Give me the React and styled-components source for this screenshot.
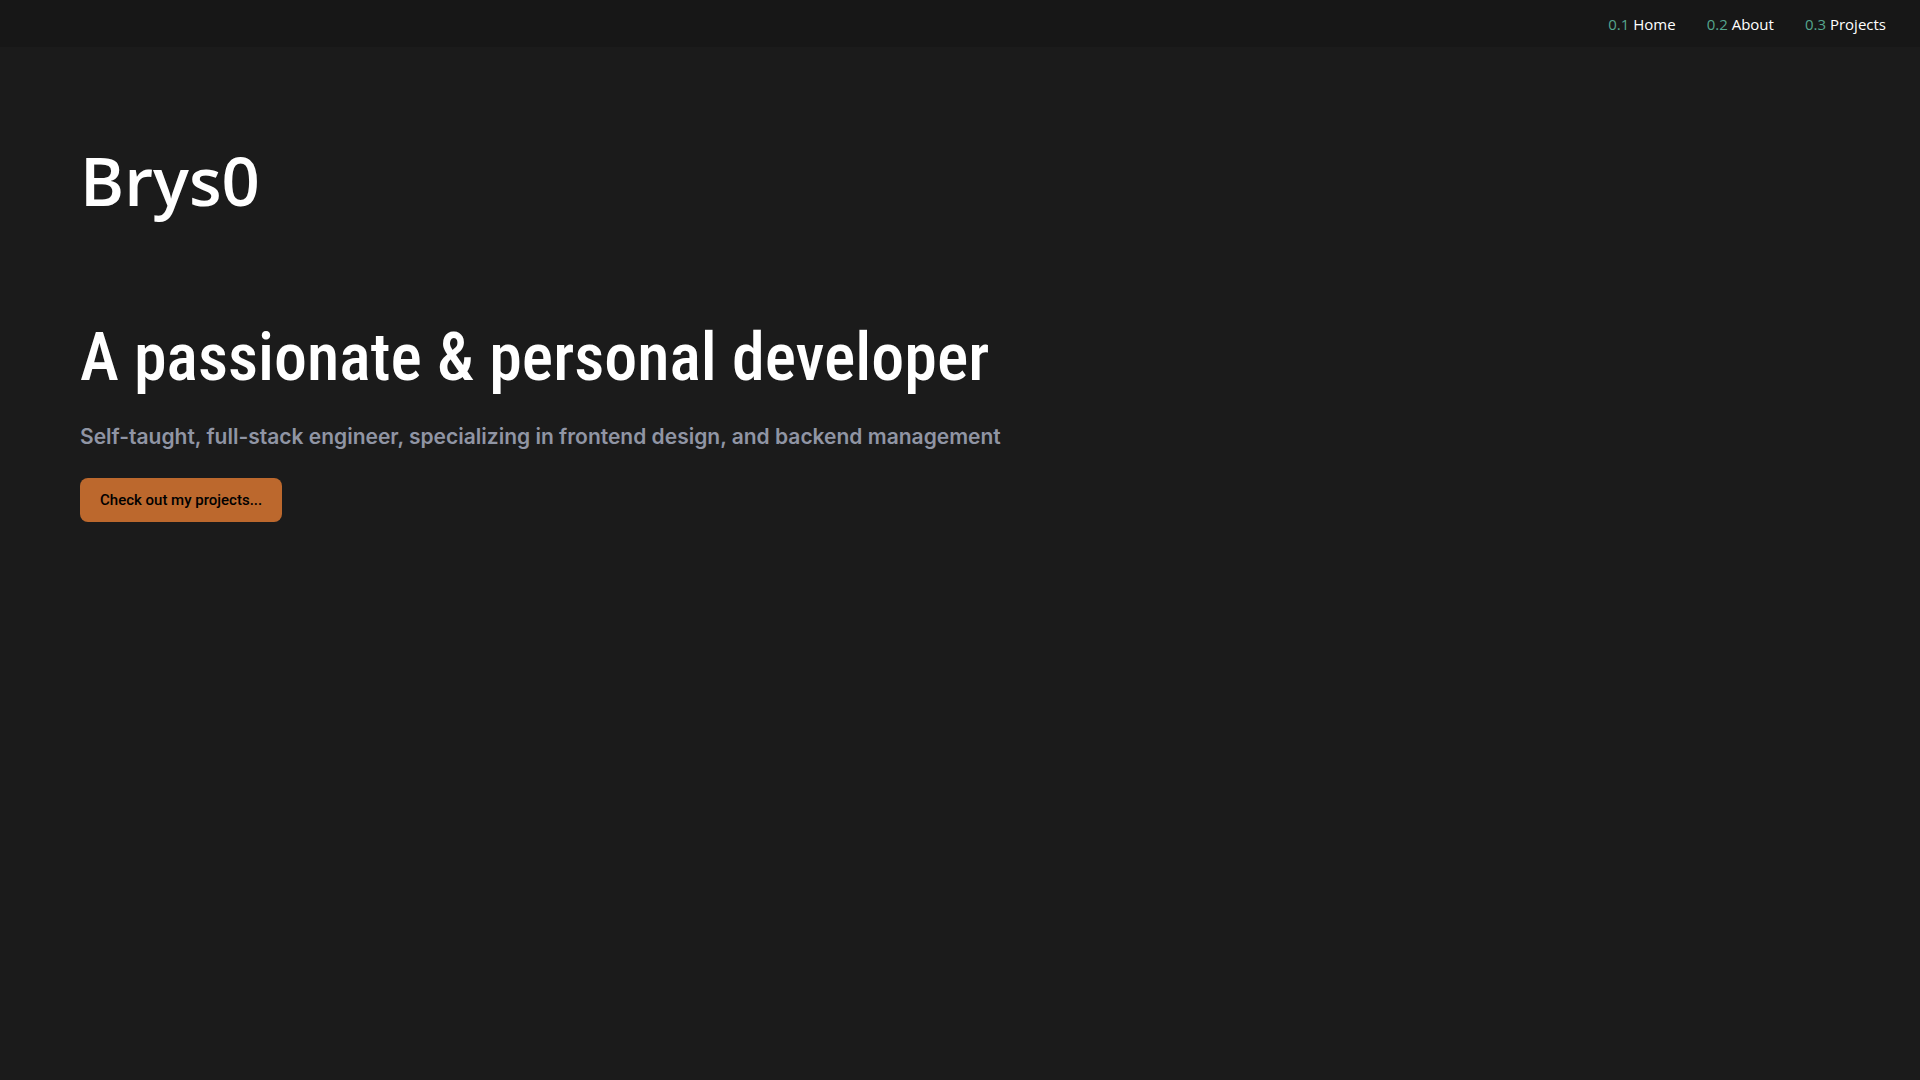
import React from "react";
import styled, { createGlobalStyle } from "styled-components";

const GlobalStyle = createGlobalStyle`
  *, *::before, *::after {
    box-sizing: border-box;
  }

  body {
    margin: 0;
    background: #1b1b1b;
    color: #ffffff;
    font-family: "Open Sans", sans-serif;
  }
`;

const Page = styled.div`
  display: flex;
  flex-direction: column;
  min-height: 100vh;
`;

const NavBar = styled.nav`
  display: flex;
  justify-content: flex-end;
  padding: 12px 34px 11px;
  background: #171717;
`;

const NavList = styled.ul`
  display: flex;
  gap: 31px;
  margin: 0;
  padding: 0;
  list-style: none;
`;

const NavLink = styled.a`
  display: block;
  color: #ffffff;
  font-size: 15px;
  line-height: 24px;
  text-decoration: none;
`;

const NavIndex = styled.span`
  color: #55a58e;
`;

const Hero = styled.main`
  display: flex;
  flex-direction: column;
  align-items: flex-start;
  padding: 80px;
`;

const Brand = styled.h1`
  margin: 0 0 67px;
  font-size: 67px;
  font-weight: 600;
  line-height: 106px;
`;

const Headline = styled.h2`
  margin: 0;
  font-family: "Roboto Condensed", Roboto, sans-serif;
  font-size: 66px;
  font-weight: 500;
  line-height: 116px;
`;

const Subtitle = styled.p`
  margin: 6px 0 26px;
  color: #9095a4;
  font-family: Inter, sans-serif;
  font-size: 21px;
  font-weight: 600;
  line-height: 30px;
`;

const ProjectsButton = styled.button`
  padding: 10px 20px;
  border: 0;
  border-radius: 8px;
  background: #bc682d;
  color: #000000;
  font-family: Roboto, sans-serif;
  font-size: 15px;
  font-weight: 500;
  line-height: 24px;
  cursor: pointer;
`;

const links = [
  { index: "0.1", label: "Home", href: "#home" },
  { index: "0.2", label: "About", href: "#about" },
  { index: "0.3", label: "Projects", href: "#projects" },
];

export default function App() {
  return (
    <Page>
      <GlobalStyle />
      <NavBar>
        <NavList>
          {links.map(({ index, label, href }) => (
            <li key={index}>
              <NavLink href={href}>
                <NavIndex>{index}</NavIndex> {label}
              </NavLink>
            </li>
          ))}
        </NavList>
      </NavBar>
      <Hero>
        <Brand>Brys0</Brand>
        <Headline>A passionate &amp; personal developer</Headline>
        <Subtitle>
          Self-taught, full-stack engineer, specializing in frontend design, and backend management
        </Subtitle>
        <ProjectsButton type="button">Check out my projects...</ProjectsButton>
      </Hero>
    </Page>
  );
}
